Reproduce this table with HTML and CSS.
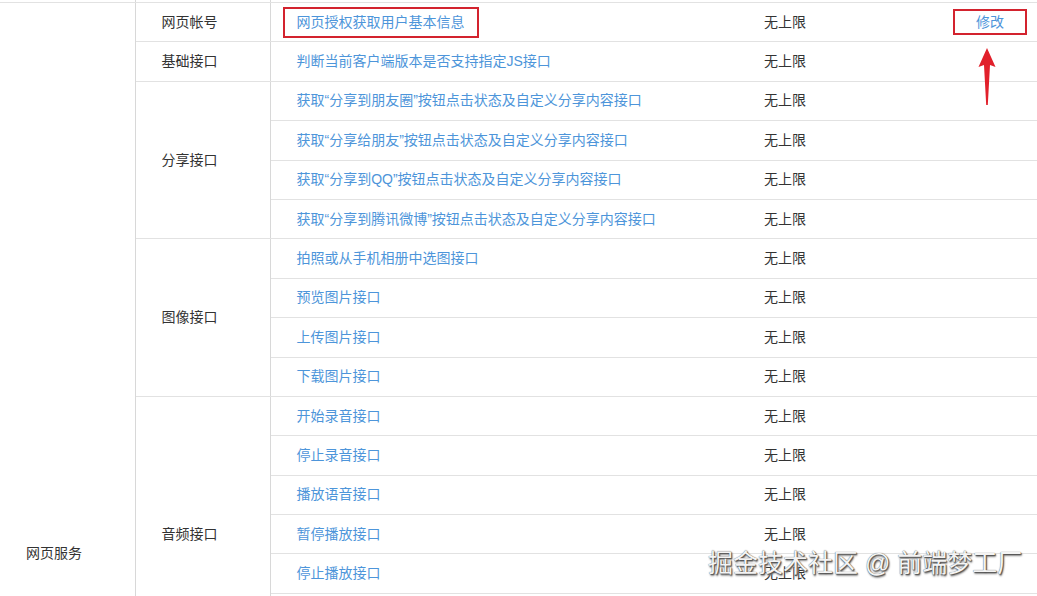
FILE: index.html
```html
<!DOCTYPE html>
<html lang="zh-CN">
<head>
<meta charset="utf-8">
<title>网页服务接口权限</title>
<link rel="stylesheet" href="styles.css">
</head>
<body>
<div class="page">
<table class="perm">
  <colgroup>
    <col class="c1"><col class="c2"><col class="c3"><col class="c4"><col class="c5">
  </colgroup>
  <tbody>
    <tr class="prev"><td></td><td></td><td></td><td></td><td></td></tr>
    <tr>
      <td class="svc" rowspan="28">网页服务</td>
      <td class="grp">网页帐号</td>
      <td class="api"><a class="link boxed">网页授权获取用户基本信息</a></td>
      <td class="limit">无上限</td>
      <td class="op">
        <a class="edit">修改</a>
        <svg class="arrow" width="24" height="60" viewBox="0 0 24 60"><polygon points="12,0 20.5,19 15,17 12.8,57 11.2,57 9,17 3.5,19" fill="#e1202b"/></svg>
      </td>
    </tr>
    <tr><td class="grp">基础接口</td><td class="api"><a class="link">判断当前客户端版本是否支持指定JS接口</a></td><td class="limit">无上限</td><td class="op"></td></tr>
    <tr><td class="grp" rowspan="4">分享接口</td><td class="api"><a class="link">获取“分享到朋友圈”按钮点击状态及自定义分享内容接口</a></td><td class="limit">无上限</td><td class="op"></td></tr>
    <tr><td class="api"><a class="link">获取“分享给朋友”按钮点击状态及自定义分享内容接口</a></td><td class="limit">无上限</td><td class="op"></td></tr>
    <tr><td class="api"><a class="link">获取“分享到QQ”按钮点击状态及自定义分享内容接口</a></td><td class="limit">无上限</td><td class="op"></td></tr>
    <tr><td class="api"><a class="link">获取“分享到腾讯微博”按钮点击状态及自定义分享内容接口</a></td><td class="limit">无上限</td><td class="op"></td></tr>
    <tr><td class="grp" rowspan="4">图像接口</td><td class="api"><a class="link">拍照或从手机相册中选图接口</a></td><td class="limit">无上限</td><td class="op"></td></tr>
    <tr><td class="api"><a class="link">预览图片接口</a></td><td class="limit">无上限</td><td class="op"></td></tr>
    <tr><td class="api"><a class="link">上传图片接口</a></td><td class="limit">无上限</td><td class="op"></td></tr>
    <tr><td class="api"><a class="link">下载图片接口</a></td><td class="limit">无上限</td><td class="op"></td></tr>
    <tr><td class="grp" rowspan="7">音频接口</td><td class="api"><a class="link">开始录音接口</a></td><td class="limit">无上限</td><td class="op"></td></tr>
    <tr><td class="api"><a class="link">停止录音接口</a></td><td class="limit">无上限</td><td class="op"></td></tr>
    <tr><td class="api"><a class="link">播放语音接口</a></td><td class="limit">无上限</td><td class="op"></td></tr>
    <tr><td class="api"><a class="link">暂停播放接口</a></td><td class="limit">无上限</td><td class="op"></td></tr>
    <tr><td class="api"><a class="link">停止播放接口</a></td><td class="limit">无上限</td><td class="op"></td></tr>
    <tr><td class="api"><a class="link">上传语音接口</a></td><td class="limit">无上限</td><td class="op"></td></tr>
    <tr><td class="api"><a class="link">下载语音接口</a></td><td class="limit">无上限</td><td class="op"></td></tr>
    <tr><td class="grp">智能接口</td><td class="api"><a class="link">识别音频并返回识别结果接口</a></td><td class="limit">无上限</td><td class="op"></td></tr>
    <tr><td class="grp">设备信息</td><td class="api"><a class="link">获取网络状态接口</a></td><td class="limit">无上限</td><td class="op"></td></tr>
    <tr><td class="grp" rowspan="2">地理位置</td><td class="api"><a class="link">使用微信内置地图查看位置接口</a></td><td class="limit">无上限</td><td class="op"></td></tr>
    <tr><td class="api"><a class="link">获取地理位置接口</a></td><td class="limit">无上限</td><td class="op"></td></tr>
    <tr><td class="grp" rowspan="7">界面操作</td><td class="api"><a class="link">隐藏右上角菜单接口</a></td><td class="limit">无上限</td><td class="op"></td></tr>
    <tr><td class="api"><a class="link">显示右上角菜单接口</a></td><td class="limit">无上限</td><td class="op"></td></tr>
    <tr><td class="api"><a class="link">关闭当前网页窗口接口</a></td><td class="limit">无上限</td><td class="op"></td></tr>
    <tr><td class="api"><a class="link">批量隐藏功能按钮接口</a></td><td class="limit">无上限</td><td class="op"></td></tr>
    <tr><td class="api"><a class="link">批量显示功能按钮接口</a></td><td class="limit">无上限</td><td class="op"></td></tr>
    <tr><td class="api"><a class="link">隐藏所有非基础按钮接口</a></td><td class="limit">无上限</td><td class="op"></td></tr>
    <tr><td class="api"><a class="link">显示所有功能按钮接口</a></td><td class="limit">无上限</td><td class="op"></td></tr>
  </tbody>
</table>
<div class="watermark">掘金技术社区 @ 前端梦工厂</div>
</div>
</body>
</html>
```

FILE: styles.css
```css
html, body {
  margin: 0;
  padding: 0;
  overflow: hidden;
  background: #fff;
}
body {
  font-family: "Liberation Sans", "Noto Sans CJK SC", sans-serif;
  font-size: 14px;
  color: #333;
}
.page {
  position: relative;
  width: 1037px;
  height: 596px;
  overflow: hidden;
}
.perm {
  border-collapse: collapse;
  table-layout: fixed;
  width: 1037px;
  margin-top: -37.4px;
}
.c1 { width: 135px; }
.c2 { width: 135px; }
.c3 { width: 480px; }
.c4 { width: 190px; }
.c5 { width: 97px; }
.perm tr { height: 39.4px; }
.perm td {
  border-top: 1px solid #e2e2e2;
  border-bottom: 1px solid #e2e2e2;
  padding: 0;
  vertical-align: middle;
  line-height: 21px;
  white-space: nowrap;
}
.perm td.svc {
  padding-left: 26px;
  border-right: 1px solid #d8d8d8;
}
.perm td.grp {
  padding-left: 26px;
  border-right: 1px solid #d8d8d8;
}
.perm td.api { padding-left: 12px; }
.perm td.limit { padding-left: 14px; }
.perm td.op {
  position: relative;
  padding-left: 13px;
  border-right: 1px solid #e2e2e2;
}
.perm tr.prev td { border-right: 1px solid #d8d8d8; }
.perm tr.prev td:nth-child(3),
.perm tr.prev td:nth-child(4) { border-right: none; }
.link {
  display: inline-block;
  color: #4d95da;
  padding: 3px 12px;
  border: 2px solid transparent;
}
.link.boxed { border-color: #d3232e; }
.edit {
  display: inline-block;
  color: #4d95da;
  line-height: 22px;
  width: 70px;
  text-align: center;
  border: 2px solid #d3232e;
}
.arrow {
  position: absolute;
  left: 35px;
  top: 45px;
}
.watermark {
  position: absolute;
  left: 708px;
  top: 546px;
  font-size: 25px;
  line-height: 34px;
  color: #f4f4f4;
  white-space: nowrap;
  text-shadow: 0 0 1px #444, 1px 1px 1px #555, 1px 2px 2px #888;
}
```
